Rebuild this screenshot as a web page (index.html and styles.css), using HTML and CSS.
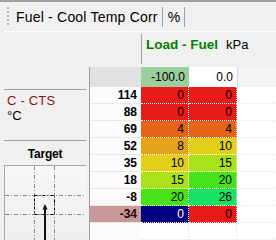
FILE: index.html
```html
<!DOCTYPE html>
<html lang="en">
<head>
    <meta charset="UTF-8">
    <title>Fuel - Cool Temp Corr</title>
    <link rel="stylesheet" href="styles.css">
</head>
<body>
<!--顶部线-->
<div class="top-line"></div>
<!--工具栏-->
<div class="toolbar">
    <span class="grip"></span>
    <span class="tool-title">Fuel - Cool Temp Corr</span>
    <span class="tool-sep"></span>
    <span class="tool-unit">%</span>
    <span class="tool-sep"></span>
</div>

<div class="main">
    <!--左侧面板-->
    <div class="side">
        <div class="side-line"></div>
        <div class="axis-name">C - CTS</div>
        <div class="axis-unit">°C</div>
        <div class="side-line second"></div>
        <div class="target-title">Target</div>
        <div class="target-box">
            <svg width="83" height="80" viewBox="0 0 83 80">
                <defs>
                    <linearGradient id="bgGrad" x1="0" y1="0" x2="0" y2="1">
                        <stop offset="0" stop-color="#f7f7f7"/>
                        <stop offset="1" stop-color="#ececec"/>
                    </linearGradient>
                </defs>
                <rect x="0.5" y="0.5" width="82" height="90" fill="url(#bgGrad)" stroke="#a8a8a8"/>
                <!--网格线-->
                <g stroke="#8a8a8a" stroke-width="1" stroke-dasharray="4 2 1 2" fill="none">
                    <line x1="30.5" y1="1" x2="30.5" y2="80"/>
                    <line x1="50.5" y1="1" x2="50.5" y2="80"/>
                    <line x1="1" y1="30.5" x2="82" y2="30.5"/>
                    <line x1="1" y1="49.5" x2="82" y2="49.5"/>
                </g>
                <rect x="30.5" y="30.5" width="20" height="19" fill="none" stroke="#000" stroke-dasharray="3 2 1 2"/>
                <!--箭头-->
                <line x1="41" y1="44" x2="41" y2="80" stroke="#111" stroke-width="2"/>
                <polygon points="41,39 38.5,44.5 43.5,44.5" fill="#111"/>
            </svg>
        </div>
    </div>

    <!--右侧表格-->
    <div class="content">
        <div class="load-head">
            <span class="load-name">Load - Fuel</span>
            <span class="load-unit">kPa</span>
        </div>

        <div class="table">
            <div class="row head-row">
                <div class="label corner"></div>
                <div class="cell col-head active">-100.0</div>
                <div class="cell col-head">0.0</div>
                <div class="cell rest head-rest"></div>
            </div>
            <div class="row">
                <div class="label">114</div>
                <div class="cell" style="background:#e81a1a">0</div>
                <div class="cell" style="background:#e81a1a">0</div>
                <div class="cell rest"></div>
            </div>
            <div class="row">
                <div class="label">88</div>
                <div class="cell" style="background:#e81a1a">0</div>
                <div class="cell" style="background:#e81a1a">0</div>
                <div class="cell rest"></div>
            </div>
            <div class="row">
                <div class="label">69</div>
                <div class="cell" style="background:#e4641a">4</div>
                <div class="cell" style="background:#e4641a">4</div>
                <div class="cell rest"></div>
            </div>
            <div class="row">
                <div class="label">52</div>
                <div class="cell" style="background:#e3a31b">8</div>
                <div class="cell" style="background:#e2cf1a">10</div>
                <div class="cell rest"></div>
            </div>
            <div class="row">
                <div class="label">35</div>
                <div class="cell" style="background:#e2cf1a">10</div>
                <div class="cell" style="background:#a9e21a">15</div>
                <div class="cell rest"></div>
            </div>
            <div class="row">
                <div class="label">18</div>
                <div class="cell" style="background:#a9e21a">15</div>
                <div class="cell" style="background:#47e21a">20</div>
                <div class="cell rest"></div>
            </div>
            <div class="row">
                <div class="label">-8</div>
                <div class="cell" style="background:#47e21a">20</div>
                <div class="cell" style="background:#18e264">26</div>
                <div class="cell rest"></div>
            </div>
            <div class="row">
                <div class="label current">-34</div>
                <div class="cell selected" style="background:#000080">0</div>
                <div class="cell" style="background:#e81a1a">0</div>
                <div class="cell rest"></div>
            </div>
            <div class="row empty">
                <div class="label"></div>
                <div class="cell"></div>
                <div class="cell"></div>
                <div class="cell rest"></div>
            </div>
        </div>
    </div>
</div>
</body>
</html>
```

FILE: styles.css
```css
* {
    box-sizing: border-box;
}

body {
    margin: 0;
    width: 276px;
    height: 240px;
    overflow: hidden;
    background-color: #f0f0f0;
    font-family: "Liberation Sans", Arial, sans-serif;
    color: #000;
}

/*顶部线*/
.top-line {
    height: 2px;
    background-color: #a0a0a0;
}

/*工具栏*/
.toolbar {
    height: 30px;
    margin-left: 4px;
    display: flex;
    align-items: center;
    border-bottom: 1px solid #fff;
    font-size: 14px;
}

.toolbar .grip {
    width: 2px;
    height: 19px;
    margin-left: 3px;
    margin-right: 7px;
    background: repeating-linear-gradient(#b8b8b8 0 2px, transparent 2px 4px);
}

.toolbar .tool-sep {
    width: 1px;
    height: 20px;
    background-color: #a0a0a0;
    margin: 0 5px 0 4px;
}

.toolbar .tool-title {
    letter-spacing: 0.2px;
}

/*主体*/
.main {
    display: flex;
    height: 208px;
}

/*左侧面板*/
.side {
    width: 82px;
    margin-left: 4px;
    margin-right: 3px;
    padding-top: 57px;
}

.side-line {
    height: 1px;
    background-color: #a0a0a0;
}

.side-line.second {
    margin-top: 17px;
}

.axis-name {
    font-size: 13px;
    line-height: 17px;
    padding: 2px 0 0 3px;
    color: #8c1414;
    letter-spacing: 0.2px;
}

.axis-unit {
    font-size: 13px;
    line-height: 14px;
    padding-left: 3px;
}

.target-title {
    font-size: 12px;
    font-weight: bold;
    text-align: center;
    line-height: 20px;
    padding-top: 3px;
    letter-spacing: -0.2px;
}

.target-box {
    margin-top: 1px;
    height: 80px;
    overflow: hidden;
}

.target-box svg {
    display: block;
}

/*右侧*/
.content {
    flex: 1;
    display: flex;
    flex-direction: column;
}

.load-head {
    margin-left: 52px;
    margin-top: 2px;
    height: 32px;
    border-left: 1px solid #a0a0a0;
    padding: 3px 0 0 4px;
    display: flex;
    align-items: baseline;
    gap: 8px;
}

.load-name {
    font-size: 13.5px;
    font-weight: bold;
    color: #008000;
}

.load-unit {
    font-size: 13px;
}

/*表格*/
.table {
    margin-top: 3px;
    border-left: 1px solid #a0a0a0;
    background-color: #fff;
    flex: 1;
}

.row {
    display: flex;
    height: 17px;
}

.row .label {
    width: 51px;
    font-size: 12px;
    font-weight: bold;
    text-align: right;
    padding-right: 4px;
    line-height: 16px;
    background-color: #fbfbfb;
    border-bottom: 1px solid #e8e8e8;
}

.row .label.current {
    background-color: #c99999;
    color: #2a0000;
}

.row .cell {
    width: 48px;
    font-size: 12px;
    text-align: right;
    padding-right: 4px;
    line-height: 16px;
    border-right: 1px dotted #fff;
    border-bottom: 1px dotted #fff;
}

.row .cell.selected {
    color: #fff;
}

.row .cell.rest {
    flex: 1;
    border-right: none;
    border-left: 1px dotted #e4e4e4;
    border-bottom: 1px dotted #e4e4e4;
    margin-left: -1px;
}

/*表头*/
.head-row {
    height: 20px;
}

.head-row .label.corner {
    background-color: #e1e1e1;
    border-bottom: none;
}

.head-row .cell {
    line-height: 20px;
    border: none;
    background-color: #fff;
}

.head-row .cell.active {
    background-color: #9ccd9c;
}

.head-row .cell.head-rest {
    background-color: #f4f4f4;
    border-left: 1px solid #d8d8d8;
    border-bottom: none;
    margin-left: 0;
}

.empty .cell {
    border-right: 1px dotted #e4e4e4;
    border-bottom: 1px dotted #e4e4e4;
}

.empty .label {
    border-bottom: none;
}
```
